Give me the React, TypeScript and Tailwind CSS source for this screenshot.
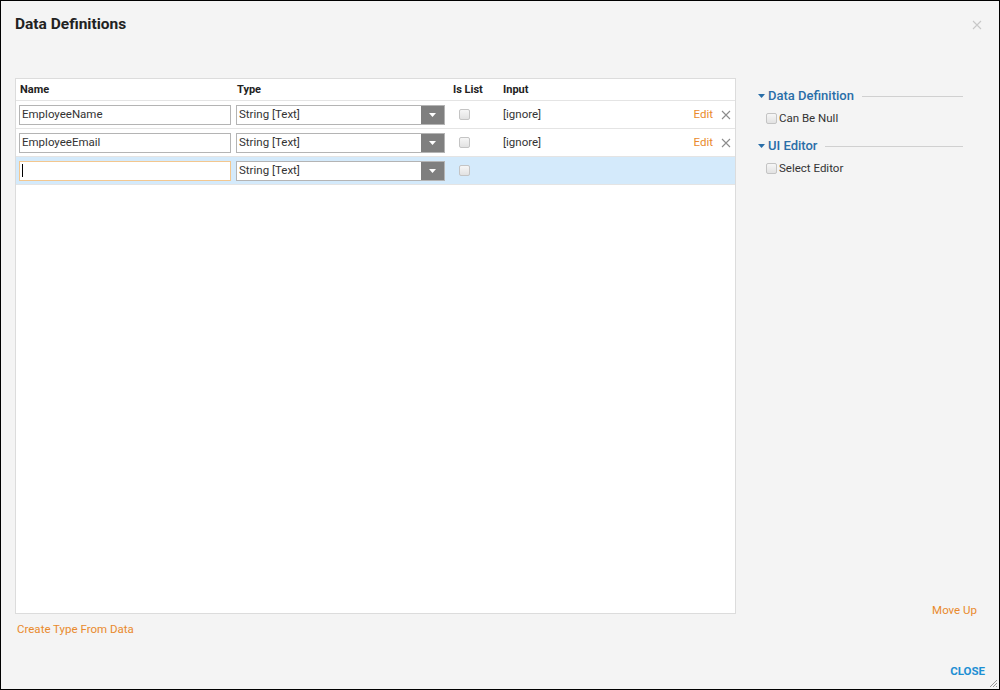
interface Field {
  name: string;
  type: string;
  input?: string;
  selected?: boolean;
}

const fields: Field[] = [
  { name: 'EmployeeName', type: 'String [Text]', input: '[ignore]' },
  { name: 'EmployeeEmail', type: 'String [Text]', input: '[ignore]' },
  { name: '', type: 'String [Text]', selected: true },
];

function Checkbox() {
  return (
    <span className="inline-block h-[11px] w-[11px] rounded-[2px] border border-[#c4c4c4] bg-gradient-to-b from-[#f6f6f6] to-[#e2e2e2]" />
  );
}

function Caret({ className }: { className: string }) {
  return (
    <svg width="7" height="4" viewBox="0 0 7 4" className={className}>
      <path d="M0 0 L7 0 L3.5 4 Z" fill="currentColor" />
    </svg>
  );
}

function Cross({ size, className }: { size: number; className: string }) {
  return (
    <svg width={size} height={size} viewBox="0 0 10 10" className={className}>
      <path d="M1 1 L9 9 M9 1 L1 9" stroke="currentColor" strokeWidth="1.1" />
    </svg>
  );
}

function FieldRow({ field }: { field: Field }) {
  return (
    <div
      className={`flex h-[28px] items-center border-b border-[#e4e4e4] text-[11.5px] text-[#333] ${
        field.selected ? 'bg-[#d4eafb]' : 'bg-white'
      }`}
    >
      <div className="w-[220px] pl-[3px]">
        <div
          className={`flex h-[20px] w-[212px] items-center border bg-white px-[2px] ${
            field.selected ? 'border-[#f3c78f]' : 'border-[#b4b4b4]'
          }`}
        >
          {field.selected ? <span className="h-[13px] w-px bg-black" /> : field.name}
        </div>
      </div>
      <div className="w-[213px]">
        <div className="flex h-[20px] w-[209px] items-stretch border border-[#b4b4b4] bg-white">
          <span className="flex flex-1 items-center pl-[2px]">{field.type}</span>
          <span className="flex w-[23px] items-center justify-center bg-[#7f7f7f] text-white">
            <Caret className="" />
          </span>
        </div>
      </div>
      <div className="flex w-[50px] items-center pl-[10px]">
        <Checkbox />
      </div>
      <div className="flex flex-1 items-center pl-[4px] pr-[4px]">
        <span className="flex-1">{field.input}</span>
        {field.input && (
          <>
            <span className="text-[#e98a2c]">Edit</span>
            <Cross size={10} className="ml-[8px] text-[#8c8c8c]" />
          </>
        )}
      </div>
    </div>
  );
}

function Section({ title, option }: { title: string; option: string }) {
  return (
    <div>
      <div className="flex h-4 items-center">
        <Caret className="mr-[3px] text-[#2a6ea8]" />
        <span className="text-[13px] font-medium leading-4 text-[#2a6ea8]">{title}</span>
        <span className="ml-[8px] h-px flex-1 bg-[#d0d0d0]" />
      </div>
      <div className="mt-[6px] flex h-4 items-center pl-[8px] text-[11.5px] leading-4 text-[#333]">
        <Checkbox />
        <span className="ml-[2px]">{option}</span>
      </div>
    </div>
  );
}

export default function App() {
  return (
    <div className="relative flex h-[690px] w-[1000px] flex-col border border-black bg-[#f4f4f4] font-['Roboto',sans-serif]">
      <div className="relative h-[77px] pl-[14px] pt-[14px]">
        <h1 className="text-[15.5px] font-bold leading-[18px] text-[#222]">Data Definitions</h1>
        <Cross size={10} className="absolute right-[17px] top-[19px] text-[#c8c8c8]" />
      </div>

      <div className="flex">
        <div className="ml-[14px] w-[721px]">
          <div className="h-[536px] border border-[#dcdcdc] bg-white">
            <div className="flex h-[22px] items-center border-b border-[#e4e4e4] pt-[2px] text-[11px] font-bold text-[#222]">
              <span className="w-[220px] pl-[4px]">Name</span>
              <span className="w-[213px] pl-[1px]">Type</span>
              <span className="w-[50px] pl-[4px]">Is List</span>
              <span className="pl-[4px]">Input</span>
            </div>
            {fields.map((f, i) => (
              <FieldRow key={i} field={f} />
            ))}
          </div>
          <div className="mt-[7px] pl-[2px] text-[11.5px] leading-4 text-[#e98a2c]">Create Type From Data</div>
        </div>

        <div className="flex h-[540px] flex-1 flex-col pl-[22px] pr-[36px] pt-[10px]">
          <Section title="Data Definition" option="Can Be Null" />
          <div className="mt-[12px]">
            <Section title="UI Editor" option="Select Editor" />
          </div>
          <div className="mt-auto mr-[-14px] text-right text-[11.5px] leading-4 text-[#e98a2c]">Move Up</div>
        </div>
      </div>

      <div className="mt-[26px] flex justify-end pr-[14px]">
        <span className="text-[11.5px] font-bold leading-4 text-[#1d8fd3]">CLOSE</span>
      </div>

      <svg width="10" height="10" viewBox="0 0 10 10" className="absolute bottom-[1px] right-[1px] text-[#999]">
        <path d="M9 2 L2 9 M9 5 L5 9 M9 8 L8 9" stroke="currentColor" strokeWidth="1" />
      </svg>
    </div>
  );
}
